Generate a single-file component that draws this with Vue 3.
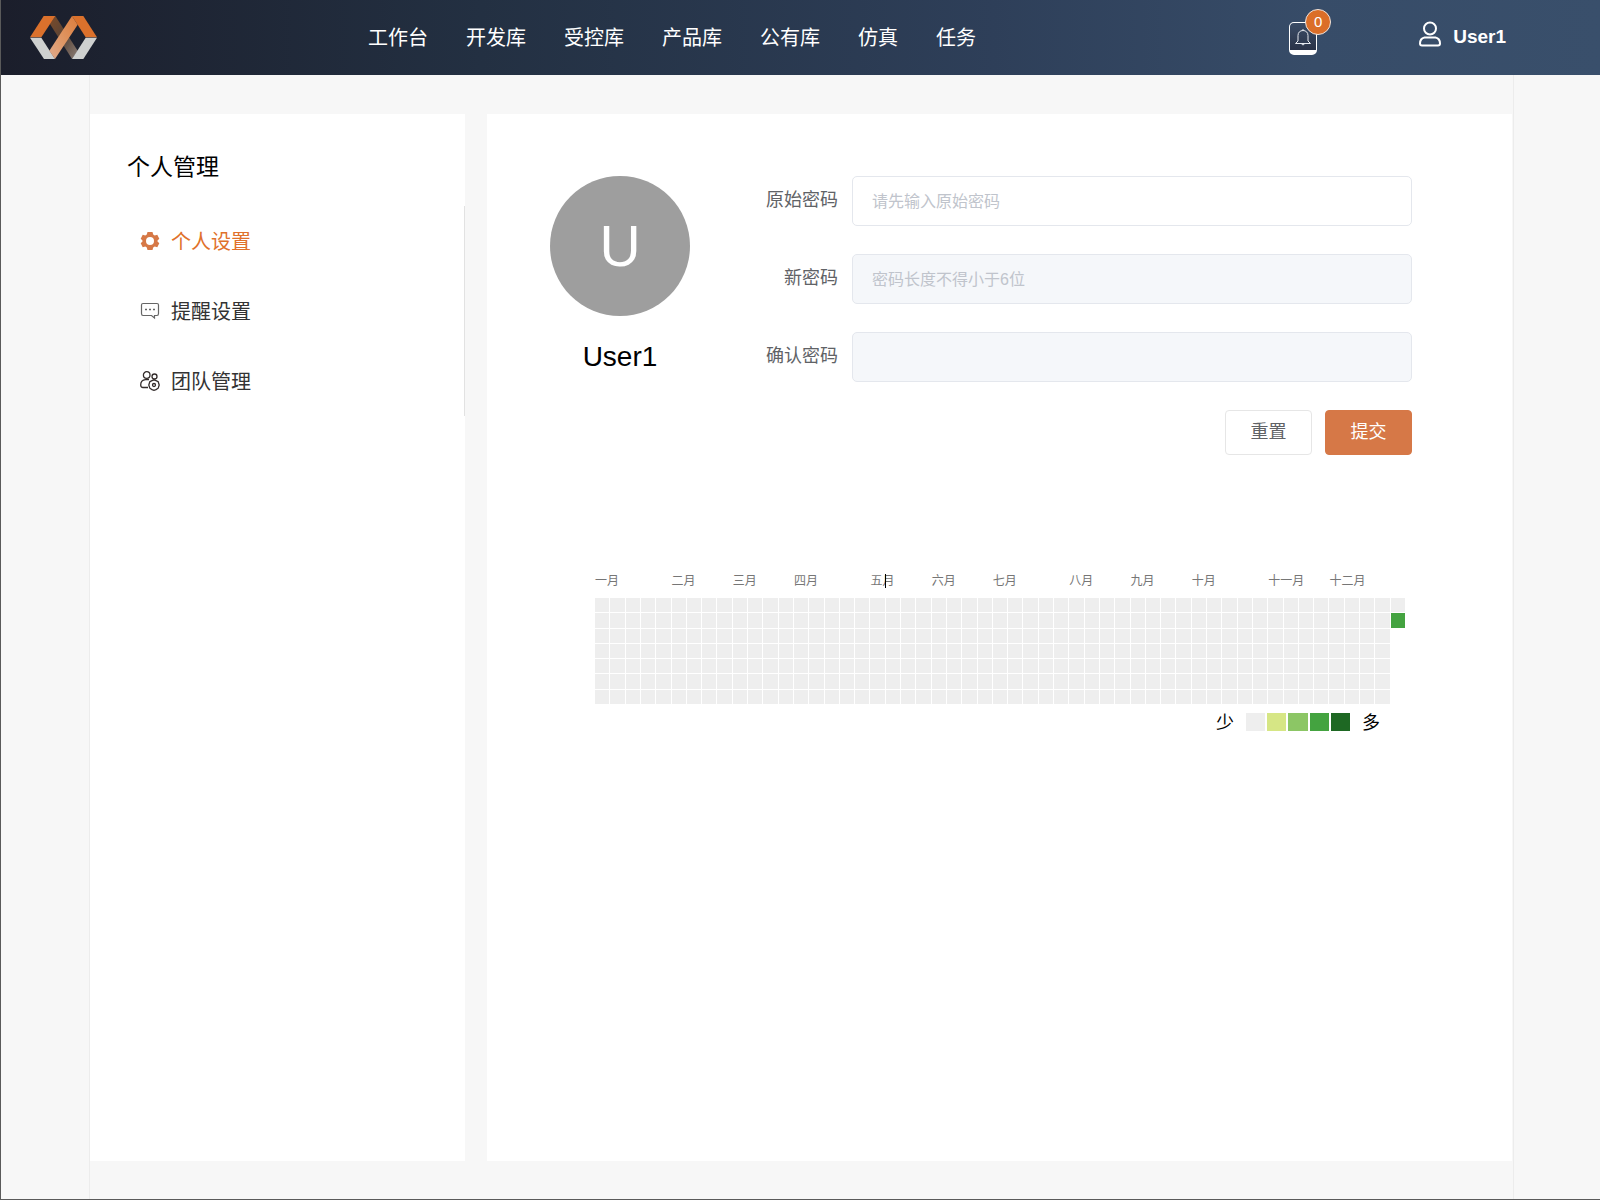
<script setup>
import { ref } from 'vue'

const navItems = ['工作台', '开发库', '受控库', '产品库', '公有库', '仿真', '任务']

const menuItems = [
  { key: 'personal', label: '个人设置' },
  { key: 'remind', label: '提醒设置' },
  { key: 'team', label: '团队管理' },
]
const activeMenu = ref('personal')

const oldPassword = ref('')
const newPassword = ref('')
const confirmPassword = ref('')

function resetForm() {
  oldPassword.value = ''
  newPassword.value = ''
  confirmPassword.value = ''
}

// Week column in which each month begins
const months = [
  { name: '一月', column: 1 },
  { name: '二月', column: 6 },
  { name: '三月', column: 10 },
  { name: '四月', column: 14 },
  { name: '五月', column: 19, caret: true },
  { name: '六月', column: 23 },
  { name: '七月', column: 27 },
  { name: '八月', column: 32 },
  { name: '九月', column: 36 },
  { name: '十月', column: 40 },
  { name: '十一月', column: 45 },
  { name: '十二月', column: 49 },
]

// 52 full weeks plus the first two days of the last one
const days = Array.from({ length: 52 * 7 + 2 }, (_, i) => (i === 365 ? 3 : 0))
const levels = [0, 1, 2, 3, 4]
</script>

<template>
  <div class="page">
    <header class="topbar">
      <a class="logo" href="#" aria-label="首页">
        <svg width="67" height="43" viewBox="0 0 201 129">
          <defs>
            <linearGradient id="beam" x1="0" y1="1" x2="1" y2="0">
              <stop offset="0" stop-color="#dfaa8c" />
              <stop offset="0.5" stop-color="#df9460" />
              <stop offset="1" stop-color="#dc7c3c" />
            </linearGradient>
            <linearGradient id="shade" x1="0" y1="0" x2="1" y2="1">
              <stop offset="0" stop-color="#7a4b2a" />
              <stop offset="0.5" stop-color="#584336" />
              <stop offset="1" stop-color="#8c7f78" />
            </linearGradient>
          </defs>
          <polygon points="60,24 76,0 143,104 126,129" fill="url(#shade)" />
          <polygon points="0,64 41,0 76,0 34,64" fill="#db712c" />
          <polygon points="0,65 34,65 75,129 42,129" fill="#cfd1d0" />
          <polygon points="126,0 160,0 201,64 167,64" fill="#db712c" />
          <polygon points="167,65 201,65 160,129 126,129" fill="#cfd1d0" />
          <polygon points="126,0 143,26 75,129 58,104" fill="url(#beam)" />
        </svg>
      </a>
      <nav class="nav">
        <a v-for="item in navItems" :key="item" href="#">{{ item }}</a>
      </nav>
      <button class="bell" type="button" aria-label="通知">
        <svg width="16" height="17" viewBox="0 0 16 17" fill="none" stroke="#e4e8ee" stroke-width="1">
          <path d="M8 0V1.500M3 12V6.500C3 3.500 5 1.500 8 1.500S13 3.500 13 6.500V12L15.500 14.500H0.500L3 12M6.500 15Q8 17 9.500 15" />
        </svg>
        <span class="badge">0</span>
      </button>
      <a class="user" href="#">
        <svg width="24" height="26" viewBox="0 0 24 26" fill="none" stroke="#fff" stroke-width="2">
          <circle cx="12" cy="7.500" r="6" />
          <path d="M6.500 16.500H17.500Q22 17.500 22 22.500Q22 24.500 20 24.500H4Q2 24.500 2 22.500Q2 17.500 6.500 16.500Z" />
        </svg>
        <span>User1</span>
      </a>
    </header>

    <div class="container">
      <aside class="sidebar">
        <h1>个人管理</h1>
        <ul class="menu">
          <li v-for="item in menuItems" :key="item.key">
            <a href="#" :class="{ active: item.key === activeMenu }" @click.prevent="activeMenu = item.key">
              <svg v-if="item.key === 'personal'" width="20" height="20" viewBox="0 0 20 20">
                <path
                  fill="#d67846"
                  fill-rule="evenodd"
                  d="M7.500 1H12.500L13.200 3.600L14.700 4.500L17.300 3.800L19.300 7.800L17.500 9.600V10.400L19.300 12.200L17.300 16.200L14.700 15.500L13.200 16.400L12.500 19H7.500L6.800 16.400L5.300 15.500L2.700 16.200L0.700 12.200L2.500 10.400V9.600L0.700 7.800L2.700 3.800L5.300 4.500L6.800 3.600ZM10 6A4 4 0 1 0 10 14A4 4 0 1 0 10 6Z"
                />
              </svg>
              <svg v-else-if="item.key === 'remind'" width="20" height="20" viewBox="0 0 20 20" fill="none" stroke="#666" stroke-width="1.200">
                <path d="M3 2.500H17Q18.500 2.500 18.500 4V12.500Q18.500 14.500 17 14.500H14.500V17L11.500 14.500H3Q1.500 14.500 1.500 12.500V4Q1.500 2.500 3 2.500Z" />
                <path d="M5 8.500H7M9 8.500H11M13 8.500H15" stroke-width="1.500" />
              </svg>
              <svg v-else width="20" height="20" viewBox="0 0 20 20" fill="none" stroke="#332c2b" stroke-width="1.300">
                <circle cx="6.700" cy="4" r="3.300" />
                <circle cx="14.500" cy="5.500" r="2.500" />
                <path d="M8 16.500H3Q0.700 16.500 0.700 14Q0.700 9 5.500 8.600H9" />
                <path d="M12 9.600L14 8.800L16 9.600L18.200 10.800L19.200 14L18.200 17.200L16 18.600L14 19.300L12 18.600L9.800 17.200L8.800 14L9.800 10.800Z" />
                <circle cx="14" cy="14" r="1.500" />
              </svg>
              <span>{{ item.label }}</span>
            </a>
          </li>
        </ul>
      </aside>

      <main class="panel">
        <section class="account">
          <div class="profile">
            <div class="avatar">U</div>
            <div class="name">User1</div>
          </div>
          <form class="form" @submit.prevent>
            <div class="field">
              <label for="old-password">原始密码</label>
              <input id="old-password" v-model="oldPassword" type="password" placeholder="请先输入原始密码" autocomplete="off" />
            </div>
            <div class="field">
              <label for="new-password">新密码</label>
              <input id="new-password" v-model="newPassword" type="password" placeholder="密码长度不得小于6位" autocomplete="off" disabled />
            </div>
            <div class="field">
              <label for="confirm-password">确认密码</label>
              <input id="confirm-password" v-model="confirmPassword" type="password" autocomplete="off" disabled />
            </div>
            <div class="actions">
              <button type="button" class="btn" @click="resetForm">重置</button>
              <button type="submit" class="btn primary">提交</button>
            </div>
          </form>
        </section>

        <section class="activity">
          <div class="months">
            <span v-for="m in months" :key="m.name" :class="{ caret: m.caret }" :style="{ gridColumnStart: m.column }">{{ m.name }}</span>
          </div>
          <div class="days">
            <i v-for="(level, i) in days" :key="i" :class="'level-' + level"></i>
          </div>
          <div class="legend">
            <span>少</span>
            <div class="swatches">
              <i v-for="level in levels" :key="level" :class="'level-' + level"></i>
            </div>
            <span>多</span>
          </div>
        </section>
      </main>
    </div>
  </div>
</template>

<style>
body {
  margin: 0;
}
</style>

<style scoped>
* {
  box-sizing: border-box;
}

.page {
  display: flex;
  flex-direction: column;
  min-height: 100vh;
  border-left: 1px solid #5a5a5a;
  border-bottom: 1px solid #5a5a5a;
  background: #f7f7f7;
  color: #000;
  font-family: "Liberation Sans", "Noto Sans CJK SC", sans-serif;
}

a {
  color: inherit;
  text-decoration: none;
}

.topbar {
  display: flex;
  align-items: center;
  height: 75px;
  padding: 0 94px 0 29px;
  background: linear-gradient(to right, #1b1e2b, #233042 30%, #2e3f59 62%, #374c68 82%, #394f6b);
  color: #fff;
}

.logo svg,
.bell svg,
.user svg,
.menu svg {
  display: block;
}

.nav {
  display: flex;
  gap: 38px;
  margin-left: 271px;
  font-size: 20px;
  line-height: 28px;
}

.bell {
  position: relative;
  display: flex;
  justify-content: center;
  width: 28px;
  height: 33px;
  margin-top: 2px;
  margin-left: auto;
  padding: 6px 0 0;
  border: 1px solid #fff;
  border-bottom-width: 5px;
  border-radius: 5px;
  background: linear-gradient(#3a4c66, #2a3348);
}

.badge {
  position: absolute;
  top: -14px;
  right: -15px;
  width: 26px;
  height: 26px;
  border: 1px solid #f0e4dc;
  border-radius: 50%;
  background: #db6e28;
  color: #fff;
  font: 15px/24px "Liberation Sans", sans-serif;
  text-align: center;
}

.user {
  display: flex;
  align-items: flex-start;
  gap: 11px;
  margin-left: 101px;
  padding-bottom: 2px;
  font-size: 19px;
  font-weight: 700;
  line-height: 32px;
}

.container {
  display: flex;
  flex: 1;
  gap: 22px;
  margin: 0 86px 0 88px;
  padding: 39px 1px 38px 0;
  border: solid #ececec;
  border-width: 0 1px;
}

.sidebar {
  flex: 0 0 375px;
  padding-top: 36px;
  background: #fff;
}

h1 {
  margin: 0 0 22px;
  padding-left: 37px;
  font-size: 23px;
  font-weight: 400;
  line-height: 34px;
}

.menu {
  margin: 0;
  padding: 0;
  border-right: 1px solid #e2e2e2;
  list-style: none;
}

.menu a {
  display: flex;
  align-items: center;
  gap: 11px;
  height: 70px;
  padding-left: 50px;
  color: #333;
  font-size: 20px;
}

.menu span {
  padding-bottom: 2px;
}

.menu a.active {
  color: #e0712b;
}

.panel {
  flex: 1;
  padding: 62px 100px 62px 63px;
  background: #fff;
}

.account {
  display: flex;
}

.profile {
  flex: 0 0 140px;
  text-align: center;
}

.avatar {
  height: 140px;
  border-radius: 50%;
  background: #9e9e9e;
  color: #fff;
  font-size: 57px;
  line-height: 140px;
}

.name {
  margin-top: 24px;
  font-size: 28px;
  line-height: 34px;
}

.form {
  display: flex;
  flex: 1;
  flex-direction: column;
  gap: 28px;
}

.field {
  display: grid;
  grid-template-columns: 148px 1fr;
  align-items: start;
  column-gap: 14px;
}

label {
  color: #606266;
  font-size: 18px;
  line-height: 49px;
  text-align: right;
}

input {
  width: 100%;
  height: 50px;
  padding: 2px 19px 0;
  border: 1px solid #e4e7ed;
  border-radius: 5px;
  outline: none;
  background: #fff;
  color: #606266;
  font: inherit;
  font-size: 16px;
}

input:disabled {
  background: #f5f7fa;
}

input::placeholder {
  color: #c0c4cc;
}

.actions {
  display: flex;
  justify-content: flex-end;
  gap: 13px;
}

.btn {
  width: 87px;
  height: 45px;
  padding: 0 0 5px;
  border: 1px solid #e6e6e6;
  border-radius: 4px;
  background: #fff;
  color: #606266;
  font: inherit;
  font-size: 18px;
}

.btn.primary {
  border-color: #d67847;
  background: #d67847;
  color: #fff;
}

.activity {
  margin: 117px 7px 0 45px;
}

.months {
  display: grid;
  grid-template-columns: repeat(53, 1fr);
  column-gap: 1px;
  color: #767676;
  font-size: 12px;
  line-height: 18px;
}

.months span {
  grid-row: 1;
  width: 0;
  white-space: nowrap;
}

.caret {
  position: relative;
}

.caret::after {
  position: absolute;
  top: 2px;
  left: 15px;
  width: 1px;
  height: 14px;
  background: #000;
  content: "";
}

.days {
  display: grid;
  grid-template-rows: repeat(7, 1fr);
  grid-template-columns: repeat(53, 1fr);
  grid-auto-flow: column;
  gap: 1px;
  height: 106px;
  margin-top: 8px;
}

.legend {
  display: flex;
  align-items: center;
  justify-content: flex-end;
  gap: 12px;
  margin-top: 4px;
  padding-right: 25px;
  font-size: 18px;
  line-height: 26px;
}

.legend span {
  padding-top: 2px;
}

.swatches {
  display: grid;
  grid-template-columns: repeat(5, 1fr);
  gap: 2px;
  width: 104px;
  height: 18px;
}

.level-0 {
  background: #eee;
}

.level-1 {
  background: #d6e685;
}

.level-2 {
  background: #8cc665;
}

.level-3 {
  background: #44a340;
}

.level-4 {
  background: #1e6823;
}
</style>
